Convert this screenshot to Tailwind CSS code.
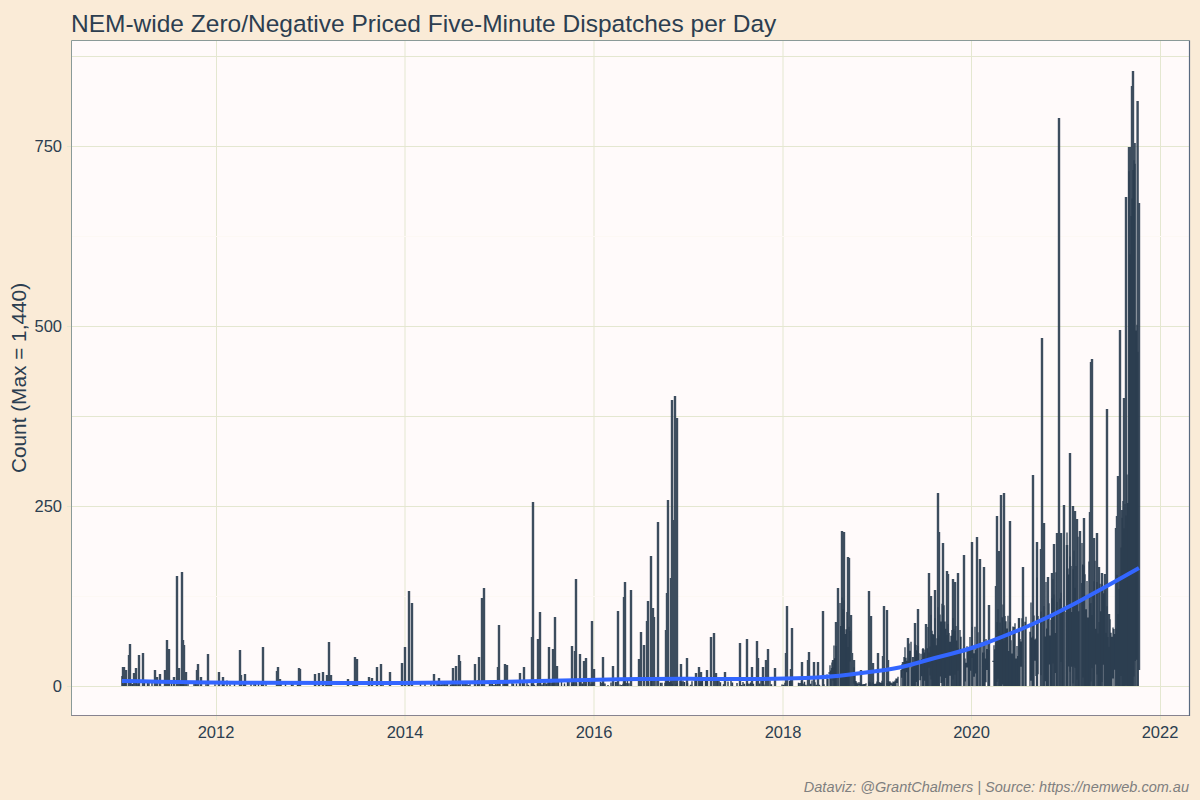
<!DOCTYPE html>
<html lang="en">
<head>
    <meta charset="UTF-8">
    <meta name="viewport" content="width=device-width, initial-scale=1.0">
    <title>NEM-wide Zero/Negative Priced Five-Minute Dispatches per Day</title>
    <script src="https://cdn.jsdelivr.net/npm/@tailwindcss/browser@4"></script>
</head>
<body class="bg-[#faebd7] font-['Liberation_Sans',Arial,sans-serif] text-[#2c3e50]">
    <div class="w-[1200px] h-[800px] flex flex-col overflow-hidden">
        <h1 class="h-[40px] pl-[71px] pt-[8px] text-[24.5px] leading-[32px] font-normal">NEM-wide Zero/Negative Priced Five-Minute Dispatches per Day</h1>

        <svg class="block w-[1200px] h-[720px]" viewBox="0 40 1200 720" xmlns="http://www.w3.org/2000/svg">
            <!-- panel -->
            <rect x="71.5" y="40.5" width="1118" height="675" fill="#fffafa"/>

            <!-- grid -->
            <g stroke="#e4e7d0" stroke-width="1" fill="none">
                <path d="M72 56.5H1189M72 146.5H1189M72 326.5H1189M72 416.5H1189M72 506.5H1189M72 686.5H1189"/>
                <path d="M216.5 41V715M405 41V715M594 41V715M783 41V715M971.5 41V715M1160.5 41V715"/>
                <path d="M67 146.5H71M67 326.5H71M67 506.5H71M67 686.5H71"/>
                <path d="M216.5 716V720M405 716V720M594 716V720M783 716V720M971.5 716V720M1160.5 716V720"/>
            </g>
            <path d="M72 236.5H1189M72 596.5H1189" stroke="#fdf8f4" stroke-width="1"/>

            <!-- series, filled in by the script below -->
            <path id="body" fill="none" stroke="#2c3e50" stroke-width="1.3"/>
            <path id="noise" fill="none" stroke="#2c3e50" stroke-width="1.4"/>
            <path id="spikes" fill="none" stroke="#2c3e50" stroke-opacity="0.92" stroke-width="2.4"/>
            <path id="trend" fill="none" stroke="#3366ff" stroke-width="4" stroke-linejoin="round"/>

            <!-- panel border -->
            <path d="M71.5 716V40.5H1189.5" fill="none" stroke="#8a9a98" stroke-width="1"/>
            <path d="M71.5 715.5H1189.5" fill="none" stroke="#87838f" stroke-width="1.2"/>
            <path d="M1189.5 40.5V716" fill="none" stroke="#5a6a80" stroke-width="1.2"/>

            <!-- y axis -->
            <g class="fill-[#2c3e50] text-[16.5px]" text-anchor="end">
                <text x="62" y="152">750</text>
                <text x="62" y="332">500</text>
                <text x="62" y="512">250</text>
                <text x="62" y="692">0</text>
            </g>
            <text class="fill-[#2c3e50] text-[20.8px]" text-anchor="middle" transform="translate(25.5 378) rotate(-90)">Count (Max = 1,440)</text>

            <!-- x axis -->
            <g class="fill-[#2c3e50] text-[16.5px]" text-anchor="middle">
                <text x="216" y="738">2012</text>
                <text x="405" y="738">2014</text>
                <text x="594" y="738">2016</text>
                <text x="783" y="738">2018</text>
                <text x="971.5" y="738">2020</text>
                <text x="1160" y="738">2022</text>
            </g>
        </svg>

        <div class="h-[40px] pr-[11px] pt-[18px] text-right text-[14.5px] leading-[18px] italic text-[#7f7f7f]">Dataviz: @GrantChalmers | Source: https://nemweb.com.au</div>
    </div>

    <script>
        const ZERO = 686;

        // x pixel, y pixel of the top of each visible spike
        const peaks = [
            [123,667],[124,667],[126,670],[129,655],[130,644],[134,673],[136,668],[139,655],[143,653],[155,670],[157,677],[160,674],[165,670],[167,640],[169,649],[174,677],[177,576],[179,668],[182,572],[183,640],[184,645],[186,672],[197,670],[198,664],[201,677],[208,654],[219,672],[223,677],[240,650],[241,675],[245,674],[263,647],[277,671],[278,667],[280,679],[299,668],[300,669],[315,674],[319,673],[323,672],[327,675],[329,642],[331,675],[348,679],[355,657],[357,659],[369,677],[372,678],[377,667],[381,664],[390,672],
            [402,663],[405,647],[409,591],[412,603],[434,674],[439,678],[453,668],[456,666],[459,655],[460,661],[475,664],[479,657],[482,598],[484,588],[498,667],[499,625],[505,664],[507,665],[520,673],[524,667],[532,637],[533,502],[538,639],[540,612],[549,647],[553,649],[555,617],[557,666],[572,646],[575,651],[576,579],[580,654],[584,661],[586,658],[592,621],[594,669],[603,657],[613,666],[618,611],[624,597],[625,582],[631,590],[639,659],[641,632],[644,645],[647,621],[648,601],[651,556],[653,608],[654,617],[658,522],[666,630],[667,593],[668,500],[671,578],[672,400],[673,520],[675,396],[677,418],[681,664],[687,658],[696,673],[699,667],
            [701,672],[707,670],[711,637],[714,633],[716,673],[725,672],[740,643],[747,639],[752,667],[757,641],[758,658],[763,667],[766,660],[768,649],[775,668],[786,653],[787,606],[791,669],[792,628],[802,662],[808,660],[809,652],[814,662],[818,662],[823,611],[832,668],[833,660],[836,622],[838,588],[842,531],[844,532],[848,557],[849,558],[851,615],[852,653],[854,660],[861,670],[869,591],[871,616],[873,663],[878,653],[883,656],[884,606],[887,610],[888,660],[903,662],[908,638],[913,657],[915,623],[918,609],[923,649],[926,624],[929,573],[931,596],[934,636],[935,590],[938,493],[939,532],[943,543],[947,571],[948,574],[953,579],[955,582],[958,573],[964,555],[972,542],[977,537],[980,559],[984,567],[989,605],[996,586],[997,516],[999,551],
            [1001,495],[1004,493],[1010,521],[1014,627],[1019,618],[1023,567],[1033,475],[1037,542],[1041,549],[1042,338],[1044,523],[1048,577],[1052,573],[1054,544],[1057,533],[1059,118],[1061,533],[1064,505],[1067,545],[1070,453],[1073,506],[1075,511],[1077,519],[1080,531],[1082,583],[1084,518],[1090,512],[1091,362],[1092,359],[1094,538],[1097,533],[1099,567],[1102,573],[1105,574],[1107,409],[1109,614],[1116,528],[1117,516],[1118,476],[1120,330],[1122,510],[1124,398],[1126,197],[1129,147],[1131,147],[1132,86],[1133,71],[1134.6,143],[1137.6,101]
        ];

        // rough top of the solid mass of bars, left to right
        const envelope = [
            [825,684],[830,660],[835,640],[840,600],[845,590],[850,610],[853,655],[856,680],[860,682],[895,680],[900,672],[905,640],[925,640],[930,610],[935,615],[940,590],[950,610],[960,625],[965,640],[970,625],[980,615],[990,645],[995,625],[1000,590],[1005,600],[1015,620],[1030,610],[1033,580],[1040,565],[1045,580],[1050,585],[1060,545],[1070,525],[1080,535],[1090,550],[1100,570],[1110,610],[1116,565],[1120,530],[1125,480],[1128,460],[1129,147],[1135,150],[1135.5,272],[1139,280]
        ];

        const trend = [
            [122,681],[200,682.5],[300,683],[400,683],[500,682],[600,679.5],[680,678.5],[700,679],[780,679],[830,677],[870,672],[900,668],[934,658],[967,650],[1000,638],[1050,617],[1100,590],[1139,568]
        ];

        let seed = 1234;
        function rnd() {
            seed = (seed * 16807) % 2147483647;
            return seed / 2147483647;
        }

        function envAt(x) {
            for (let i = 1; i < envelope.length; i++) {
                const a = envelope[i - 1], b = envelope[i];
                if (x <= b[0]) return a[1] + (b[1] - a[1]) * (x - a[0]) / (b[0] - a[0]);
            }
            return ZERO;
        }

        let spikes = '';
        peaks.forEach(p => { spikes += `M${p[0]} ${ZERO}V${p[1]}`; });
        // last days of the series stop short of zero
        spikes += 'M1139 670V203';
        document.getElementById('spikes').setAttribute('d', spikes);

        let body = '';
        for (let x = 825; x < 1139; x++) {
            // leave a slit now and then, as in the real data
            if (x < 1122 && rnd() < 0.09) { x += 1 + Math.floor(rnd() * 2); continue; }
            const h = ZERO - envAt(x);
            const top = ZERO - h * (x < 1122 ? 0.4 + 0.6 * rnd() : 0.8 + 0.2 * rnd());
            const bottom = rnd() < 0.3 ? ZERO - Math.min(h * 0.6, 28) * rnd() : ZERO;
            body += `M${x} ${bottom.toFixed(1)}V${top.toFixed(1)}`;
        }
        document.getElementById('body').setAttribute('d', body);

        // low counts along the axis
        let noise = 'M122 686V676';
        for (let x = 122; x < 825; x += 1.5) {
            if (rnd() < (x < 430 ? 0.25 : 0.6)) {
                noise += `M${x} 686V${(685 - 5 * rnd()).toFixed(1)}`;
            }
        }
        document.getElementById('noise').setAttribute('d', noise);

        // smooth the trend through the midpoints of its points
        let d = `M${trend[0][0]} ${trend[0][1]}`;
        for (let i = 1; i < trend.length - 1; i++) {
            const mx = (trend[i][0] + trend[i + 1][0]) / 2, my = (trend[i][1] + trend[i + 1][1]) / 2;
            d += `Q${trend[i][0]} ${trend[i][1]} ${mx} ${my}`;
        }
        d += `L${trend[trend.length - 1].join(' ')}`;
        document.getElementById('trend').setAttribute('d', d);
    </script>
</body>
</html>
